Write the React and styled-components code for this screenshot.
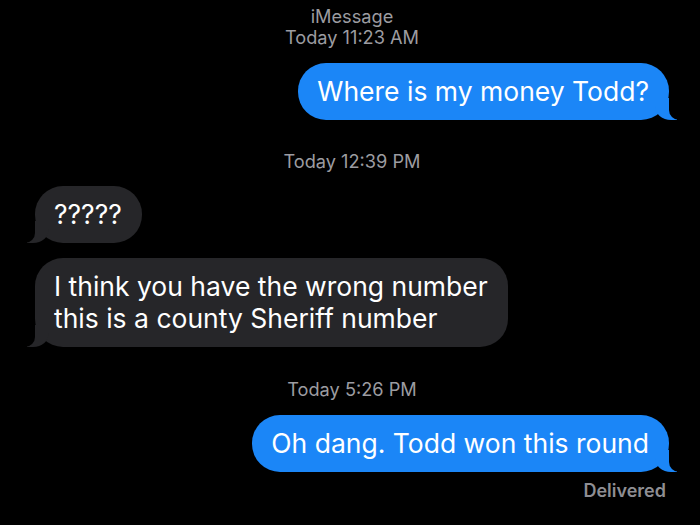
import React from "react";
import styled, { createGlobalStyle } from "styled-components";

const Global = createGlobalStyle`
  html, body { margin: 0; padding: 0; background: #000; }
  body { font-family: Inter, "Liberation Sans", Arial, sans-serif; -webkit-font-smoothing: antialiased; }
`;

const Screen = styled.div`
  width: 700px;
  height: 525px;
  background: #000;
  box-sizing: border-box;
  padding: 6px 31px 0 35px;
  display: flex;
  flex-direction: column;
  overflow: hidden;
`;

const Stamp = styled.div`
  text-align: center;
  color: #9c9ca1;
  font-size: 18.2px;
  line-height: 21px;
  margin: ${(p) => p.$m || "0"};
`;

const Row = styled.div`
  display: flex;
  justify-content: ${(p) => (p.$me ? "flex-end" : "flex-start")};
  margin-top: ${(p) => p.$mt || 0}px;
`;

const Bubble = styled.div`
  position: relative;
  background: ${(p) => (p.$me ? "#1b86f7" : "#262629")};
  color: #fff;
  font-size: 26.5px;
  line-height: 32px;
  padding: 12px 20px 13px 19px;
  border-radius: 28px;
  white-space: nowrap;
  z-index: 0;

  &::before {
    content: "";
    position: absolute;
    z-index: -1;
    bottom: 0;
    height: 22px;
    width: 22px;
    background: ${(p) => (p.$me ? "#1b86f7" : "#262629")};
    ${(p) =>
      p.$me
        ? "right: -8px; border-bottom-left-radius: 16px 14px;"
        : "left: -8px; border-bottom-right-radius: 16px 14px;"}
  }
  &::after {
    content: "";
    position: absolute;
    z-index: -1;
    bottom: 0;
    height: 22px;
    width: 26px;
    background: #000;
    ${(p) =>
      p.$me
        ? "right: -26px; border-bottom-left-radius: 10px;"
        : "left: -26px; border-bottom-right-radius: 10px;"}
  }
`;

const Status = styled.div`
  text-align: right;
  color: #8e8e93;
  font-size: 18px;
  font-weight: 600;
  line-height: 20px;
  margin-top: 9px;
  padding-right: 3px;
`;

export default function App() {
  return (
    <>
      <Global />
      <Screen>
        <Stamp>iMessage</Stamp>
        <Stamp>Today 11:23 AM</Stamp>
        <Row $me $mt={15}>
          <Bubble $me>Where is my money Todd?</Bubble>
        </Row>
        <Stamp $m="31px 0 14px">Today 12:39 PM</Stamp>
        <Row>
          <Bubble>?????</Bubble>
        </Row>
        <Row $mt={15}>
          <Bubble>
            I think you have the wrong number
            <br />
            this is a county Sheriff number
          </Bubble>
        </Row>
        <Stamp $m="32px 0 15px">Today 5:26 PM</Stamp>
        <Row $me>
          <Bubble $me>Oh dang. Todd won this round</Bubble>
        </Row>
        <Status>Delivered</Status>
      </Screen>
    </>
  );
}
